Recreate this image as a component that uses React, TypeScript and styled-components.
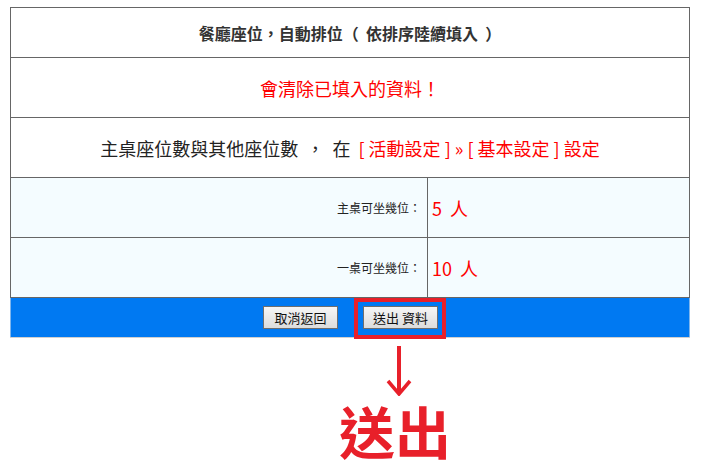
import React from "react";
import styled, { createGlobalStyle } from "styled-components";

const GlobalStyle = createGlobalStyle`
  body {
    margin: 0;
    background: #ffffff;
    font-family: "Liberation Sans", "Noto Sans CJK TC", sans-serif;
  }
`;

const Page = styled.div`
  padding: 7px 0 0 10px;
`;

const FormTable = styled.table`
  width: 680px;
  border-collapse: collapse;
  border-spacing: 0;
`;

const Cell = styled.td<{ h: number }>`
  height: ${(p) => p.h - 1}px;
  padding: 0;
  border: 1px solid #666666;
  text-align: center;
  vertical-align: middle;
  font-family: "Noto Sans CJK TC", sans-serif;
`;

const Title = styled.span`
  font-size: 16px;
  font-weight: bold;
  color: #333333;
  white-space: pre;
`;

const Warning = styled.span`
  font-size: 18px;
  color: #ff0000;
`;

const Notice = styled.span`
  font-size: 18px;
  color: #222222;
  white-space: pre;
`;

const RedLink = styled.span`
  color: #ff0000;
`;

const LabelCell = styled.td`
  width: 410px;
  height: 59px;
  padding: 0 6px 0 0;
  border: 1px solid #666666;
  background: #f4fcff;
  text-align: right;
  font-size: 12px;
  color: #222222;
  font-family: "Noto Sans CJK TC", sans-serif;
`;

const ValueCell = styled.td`
  height: 59px;
  padding: 0 0 0 4px;
  border: 1px solid #666666;
  background: #f4fcff;
  text-align: left;
  font-size: 18px;
  color: #ff0000;
  font-family: "Noto Sans CJK TC", sans-serif;
  white-space: pre;
`;

const ActionCell = styled.td`
  height: 39px;
  padding: 0;
  background: #0079f2;
  border-left: 1px solid #7fb6ee;
  border-right: 1px solid #7fb6ee;
  border-bottom: 1px solid #d0d0d0;
`;

const ActionBar = styled.div`
  display: flex;
  justify-content: center;
  align-items: center;
  gap: 25px;
  padding-left: 1px;
`;

const GrayButton = styled.button`
  width: 75px;
  height: 23px;
  padding: 0;
  border: 1px solid #6e6e6e;
  background: linear-gradient(#f6f6f6, #dcdcdc);
  font-family: "Noto Sans CJK TC", sans-serif;
  font-size: 13px;
  color: #111111;
  cursor: pointer;
`;

const Highlight = styled.span`
  position: relative;
  display: inline-flex;

  &::after {
    content: "";
    position: absolute;
    left: -9px;
    right: -8px;
    top: -8px;
    bottom: -10px;
    border: 4px solid #e8202a;
    pointer-events: none;
  }
`;

const Annotation = styled.div`
  width: 120px;
  margin: 8px 0 0 325px;
  display: flex;
  flex-direction: column;
  align-items: center;
`;

const Arrow = styled.svg`
  display: block;
  margin-left: 7px;
`;

const BigLabel = styled.div`
  margin-top: 2px;
  font-family: "Noto Sans CJK TC", sans-serif;
  font-weight: bold;
  font-size: 56px;
  line-height: 64px;
  color: #e8202a;
`;

export default function App() {
  return (
    <Page>
      <GlobalStyle />
      <FormTable>
        <tbody>
          <tr>
            <Cell colSpan={2} h={50}>
              <Title>餐廳座位，自動排位（  依排序陸續填入  ）</Title>
            </Cell>
          </tr>
          <tr>
            <Cell colSpan={2} h={60}>
              <Warning>會清除已填入的資料！</Warning>
            </Cell>
          </tr>
          <tr>
            <Cell colSpan={2} h={60}>
              <Notice>
                主桌座位數與其他座位數  ，  在  <RedLink>[ 活動設定 ] » [ 基本設定 ] 設定</RedLink>
              </Notice>
            </Cell>
          </tr>
          <tr>
            <LabelCell>主桌可坐幾位：</LabelCell>
            <ValueCell>5  人</ValueCell>
          </tr>
          <tr>
            <LabelCell>一桌可坐幾位：</LabelCell>
            <ValueCell>10  人</ValueCell>
          </tr>
          <tr>
            <ActionCell colSpan={2}>
              <ActionBar>
                <GrayButton>取消返回</GrayButton>
                <Highlight>
                  <GrayButton>送出 資料</GrayButton>
                </Highlight>
              </ActionBar>
            </ActionCell>
          </tr>
        </tbody>
      </FormTable>
      <Annotation>
        <Arrow width="26" height="50" viewBox="0 0 26 50">
          <line x1="13" y1="0" x2="13" y2="48" stroke="#e8202a" strokeWidth="4" />
          <polyline
            points="2,35 13,48 24,35"
            fill="none"
            stroke="#e8202a"
            strokeWidth="3.5"
            strokeLinejoin="miter"
          />
        </Arrow>
        <BigLabel>送出</BigLabel>
      </Annotation>
    </Page>
  );
}
